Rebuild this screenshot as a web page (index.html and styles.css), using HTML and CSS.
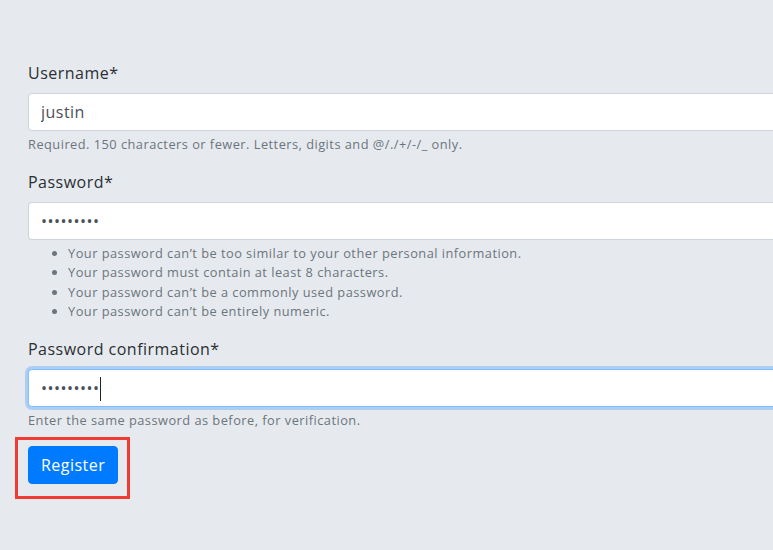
FILE: index.html
```html
<!DOCTYPE html>
<html lang="en">
<head>
<meta charset="utf-8">
<title>Register</title>
<link rel="stylesheet" href="styles.css">
</head>
<body>
<main class="page">
  <form class="form">
    <div class="form-group">
      <label class="form-label" for="id_username">Username*</label>
      <input class="form-control" id="id_username" type="text" value="justin">
      <small class="form-text">Required. 150 characters or fewer. Letters, digits and @/./+/-/_ only.</small>
    </div>
    <div class="form-group">
      <label class="form-label" for="id_password1">Password*</label>
      <input class="form-control" id="id_password1" type="password" value="123456789">
      <small class="form-text">
        <ul class="help-list">
          <li>Your password can’t be too similar to your other personal information.</li>
          <li>Your password must contain at least 8 characters.</li>
          <li>Your password can’t be a commonly used password.</li>
          <li>Your password can’t be entirely numeric.</li>
        </ul>
      </small>
    </div>
    <div class="form-group">
      <label class="form-label" for="id_password2">Password confirmation*</label>
      <div class="input-wrap">
        <input class="form-control is-focused" id="id_password2" type="password" value="123456789">
        <span class="caret"></span>
      </div>
      <small class="form-text">Enter the same password as before, for verification.</small>
    </div>
    <div class="highlight">
      <button class="btn" type="button">Register</button>
    </div>
  </form>
</main>
</body>
</html>
```
FILE: styles.css
```css
html, body {
  margin: 0;
  padding: 0;
  overflow: hidden;
  background: #e6eaee;
}
body {
  font-family: "Open Sans", "DejaVu Sans", sans-serif;
  font-size: 16px;
  line-height: 1.5;
  letter-spacing: 0.03em;
  color: #212529;
  height: 550px;
}
.page {
  padding: 61px 0 0 28px;
}
.form {
  width: 745px;
}
.form-group {
  margin-bottom: 16px;
}
.form-label {
  display: block;
  margin-bottom: 8px;
  color: #2b2f33;
}
.form-control {
  display: block;
  box-sizing: border-box;
  width: 100%;
  height: 38px;
  padding: 6px 12px;
  font-family: inherit;
  font-size: 16px;
  line-height: 1.5;
  letter-spacing: 0.03em;
  color: #495057;
  background: #fff;
  border: 1px solid #ced4da;
  border-right: none;
  border-radius: 4px 0 0 4px;
  outline: none;
}
.form-control.is-focused {
  border-color: #80bdff;
  box-shadow: 0 0 0 3px rgba(0, 123, 255, 0.25);
}
.input-wrap {
  position: relative;
}
.caret {
  position: absolute;
  left: 72px;
  top: 8px;
  width: 1px;
  height: 24px;
  background: #212529;
}
.form-text {
  display: block;
  margin-top: 4px;
  font-size: 12.8px;
  line-height: 19.2px;
  color: #6c757d;
}
.help-list {
  margin: 0;
  padding-left: 40px;
}
.highlight {
  position: relative;
  display: inline-block;
}
.highlight::after {
  content: "";
  position: absolute;
  left: -13px;
  top: -9px;
  right: -12px;
  bottom: -15px;
  border: 3px solid #f23b30;
  pointer-events: none;
}
.btn {
  display: block;
  height: 38px;
  padding: 6px 12px;
  font-family: inherit;
  font-size: 16px;
  line-height: 1.5;
  letter-spacing: 0.03em;
  color: #fff;
  background: #007bff;
  border: 1px solid #007bff;
  border-radius: 4px;
}
```
